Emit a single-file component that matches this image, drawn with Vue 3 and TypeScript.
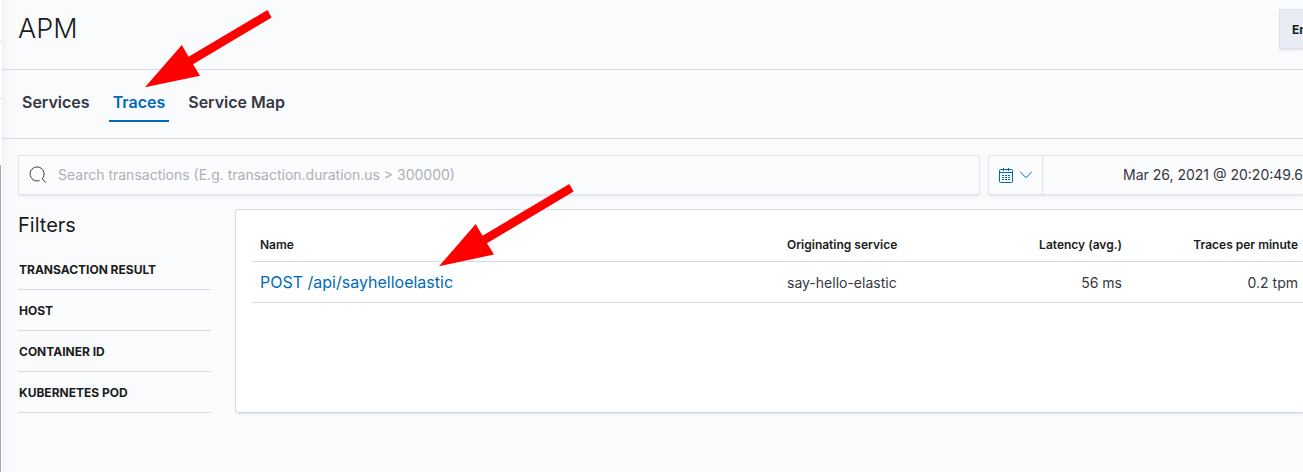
<script setup lang="ts">
interface Trace {
  name: string
  service: string
  latency: string
  rate: string
}

const tabs: { label: string; active: boolean }[] = [
  { label: 'Services', active: false },
  { label: 'Traces', active: true },
  { label: 'Service Map', active: false },
]

const filters: string[] = ['Transaction result', 'Host', 'Container ID', 'Kubernetes Pod']

const traces: Trace[] = [
  { name: 'POST /api/sayhelloelastic', service: 'say-hello-elastic', latency: '56 ms', rate: '0.2 tpm' },
]
</script>

<template>
  <div class="shell">
    <div class="rail" aria-hidden="true">
      <span class="rail-block first"></span>
      <span class="rail-block second"></span>
      <span class="rail-gap"></span>
      <span class="rail-scroll"></span>
    </div>
    <div class="page">
      <header class="header">
        <h1>APM</h1>
        <button type="button" class="header-button">En</button>
      </header>

      <nav class="tabs">
        <a v-for="tab in tabs" :key="tab.label" href="#" class="tab" :class="{ active: tab.active }">{{ tab.label }}</a>
      </nav>

      <div class="toolbar">
        <label class="search">
          <svg width="18" height="18" viewBox="0 0 18 18" fill="none" stroke="#343741" aria-hidden="true">
            <path d="M10.500 14.500A7 7 0 1 1 13.200 12.700L16.800 16.700" />
          </svg>
          <input type="text" aria-label="Search transactions" placeholder="Search transactions (E.g. transaction.duration.us &gt; 300000)" />
        </label>
        <div class="dates">
          <button type="button" class="quick" aria-label="Date quick select">
            <svg width="14" height="16" viewBox="0 0 14 16" fill="none" stroke="#006bb4" aria-hidden="true">
              <rect x="0.5" y="2.5" width="13" height="13" rx="1" />
              <path d="M0.5 5.5H13.5M4.5 1V4M9.5 1V4" />
              <path d="M3 8.500H11M3 10.500H11M3 12.500H11" stroke-dasharray="2 1" />
            </svg>
            <svg width="12" height="8" viewBox="0 0 12 8" fill="none" stroke="#006bb4" stroke-linecap="round" aria-hidden="true">
              <path d="M0.5 1L5.4 6.200Q6 6.800 6.600 6.200L11.500 1" />
            </svg>
          </button>
          <button type="button" class="date">Mar 26, 2021 @ 20:20:49.6</button>
        </div>
      </div>

      <div class="body">
        <aside class="filters">
          <h2>Filters</h2>
          <button v-for="filter in filters" :key="filter" type="button" class="filter">{{ filter }}</button>
        </aside>
        <main class="panel">
          <table>
            <colgroup>
              <col />
              <col class="col-service" />
              <col class="col-latency" />
              <col class="col-rate" />
            </colgroup>
            <thead>
              <tr>
                <th>Name</th>
                <th>Originating service</th>
                <th class="num">Latency (avg.)</th>
                <th class="num">Traces per minute</th>
              </tr>
            </thead>
            <tbody>
              <tr v-for="trace in traces" :key="trace.name">
                <td><a href="#" class="trace">{{ trace.name }}</a></td>
                <td>{{ trace.service }}</td>
                <td class="num">{{ trace.latency }}</td>
                <td class="num">{{ trace.rate }}</td>
              </tr>
            </tbody>
          </table>
        </main>
      </div>
    </div>

    <svg class="arrows" width="600" height="280" viewBox="0 0 600 280" fill="#ff0000" aria-hidden="true">
      <path d="M145 87.300L181.800 45L188.600 56.800L267.500 10L271.600 17.500L193 64.200L200 75.700Z" />
      <path d="M439 266.300L475.700 224L482.500 235.800L569.300 184L573.600 191.500L487 243.200L494 254.500Z" />
    </svg>
  </div>
</template>

<style>
body {
  margin: 0;
  background: #fafbfd;
}
</style>

<style scoped>
.shell {
  position: relative;
  display: flex;
  min-height: 100vh;
  overflow: hidden;
  background: #fafbfd;
  color: #343741;
  font-family: Inter, "Liberation Sans", sans-serif;
  font-size: 14px;
}

.shell * {
  box-sizing: border-box;
}

button,
input {
  margin: 0;
  border: 0;
  border-radius: 0;
  background: none;
  color: inherit;
  font: inherit;
}

a {
  color: #006bb4;
  text-decoration: none;
}

.rail {
  display: flex;
  flex: none;
  flex-direction: column;
  width: 2px;
  background: #fff;
}

.rail-block {
  border-bottom: 1px solid #d3dae6;
}

.rail-block.first {
  height: 42px;
}

.rail-block.second {
  height: 57px;
}

.rail-gap {
  height: 66px;
}

.rail-scroll {
  flex: 1;
  width: 1px;
  background: #a9aaae;
}

.page {
  flex: 1;
  min-width: 0;
  background: linear-gradient(to right, #f0f2f5, #f7f8fb 5px, #fafbfd 14px);
}

.header {
  display: flex;
  align-items: flex-start;
  justify-content: space-between;
  height: 70px;
  padding: 9px 0 0 16px;
  border-bottom: 1px solid #d3dae6;
}

h1 {
  margin: 0;
  color: #1a1c21;
  font-size: 27px;
  font-weight: 300;
  line-height: 40px;
}

.header-button {
  width: 24px;
  height: 40px;
  padding: 0 0 0 12px;
  overflow: hidden;
  border: 1px solid #dde1eb;
  border-right: 0;
  background: #e9ecf4;
  box-shadow: 0 2px 2px -1px rgba(152, 162, 179, 0.3);
  color: #1a1c21;
  font-size: 12px;
  font-weight: 700;
  line-height: 40px;
  text-align: left;
  white-space: nowrap;
}

.tabs {
  display: flex;
  align-items: flex-start;
  gap: 15px;
  height: 69px;
  padding: 12px 16px 0;
  border-bottom: 1px solid #d3dae6;
}

.tab {
  height: 40px;
  padding: 0 4px;
  border-bottom: 2px solid transparent;
  color: #343741;
  font-size: 16px;
  font-weight: 600;
  line-height: 40px;
}

.tab.active {
  border-color: #006bb4;
  color: #006bb4;
}

.toolbar {
  display: flex;
  gap: 8px;
  padding: 16px 0 0 16px;
}

.search,
.dates {
  display: flex;
  height: 40px;
  border: 1px solid #e0e4ed;
  background: #fbfcfd;
  box-shadow: 0 2px 2px -1px rgba(152, 162, 179, 0.3);
}

.search {
  flex: 1;
  align-items: center;
  gap: 11px;
  padding: 0 10px;
}

.search input {
  flex: 1;
  min-width: 0;
  height: 38px;
  padding: 0 0 2px;
  outline: 0;
}

.search input::placeholder {
  color: #abb0ba;
  opacity: 1;
}

.dates {
  width: 315px;
  border-right: 0;
}

.quick {
  display: flex;
  flex: none;
  align-items: center;
  gap: 7px;
  width: 54px;
  padding: 0 10px;
  border-right: 1px solid #e0e4ed;
}

.date {
  flex: 1;
  padding: 0 0 2px;
  text-align: right;
  white-space: nowrap;
}

.body {
  display: flex;
  align-items: flex-start;
  gap: 24px;
  padding: 14px 0 0 16px;
}

.filters {
  flex: none;
  width: 193px;
}

h2 {
  margin: 0 0 8px;
  color: #1a1c21;
  font-size: 20px;
  font-weight: 400;
  line-height: 32px;
}

.filter {
  display: block;
  width: 100%;
  height: 41px;
  padding: 0 1px;
  border-bottom: 1px solid #d3dae6;
  color: #1a1c21;
  font-size: 12px;
  font-weight: 700;
  text-align: left;
  text-transform: uppercase;
}

.panel {
  flex: 1;
  min-width: 0;
  min-height: 204px;
  padding: 16px 0 16px 16px;
  border: 1px solid #d3dae6;
  border-right: 0;
  border-radius: 4px 0 0 4px;
  background: #fff;
  box-shadow: 0 2px 2px -1px rgba(152, 162, 179, 0.3);
}

table {
  width: 100%;
  border-collapse: separate;
  border-spacing: 0;
  table-layout: fixed;
}

.col-service {
  width: 176px;
}

.col-latency {
  width: 175px;
}

.col-rate {
  width: 173px;
}

th,
td {
  padding: 0 8px;
  border-bottom: 1px solid #d3dae6;
  text-align: left;
  white-space: nowrap;
}

th {
  height: 36px;
  padding-top: 2px;
  color: #1a1c21;
  font-size: 12px;
  font-weight: 600;
}

td {
  height: 41px;
}

th:last-child,
td:last-child {
  padding-right: 5px;
}

.num {
  text-align: right;
}

.trace {
  font-size: 16px;
}

.arrows {
  position: absolute;
  top: 0;
  left: 0;
  pointer-events: none;
}
</style>
